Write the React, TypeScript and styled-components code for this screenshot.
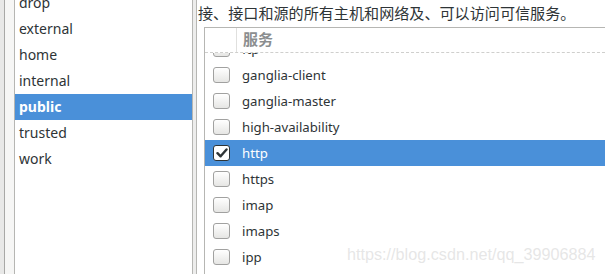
import React from "react";
import styled, { createGlobalStyle } from "styled-components";

const GlobalStyle = createGlobalStyle`
  html, body {
    margin: 0;
    padding: 0;
    background: #ffffff;
  }
  body {
    font-family: "Noto Sans", "Noto Sans CJK SC", sans-serif;
    color: #2e3436;
  }
`;

const zones = ["drop", "external", "home", "internal", "public", "trusted", "work"];
const services = [
  "ftp",
  "ganglia-client",
  "ganglia-master",
  "high-availability",
  "http",
  "https",
  "imap",
  "imaps",
  "ipp",
  "ipp-client",
];

const Frame = styled.div`
  display: flex;
  width: 605px;
  height: 274px;
  overflow: hidden;
  position: relative;
`;

const Gutter = styled.div`
  width: 4px;
  background: #e8e8e7;
  border-right: 1px solid #a8a8a6;
  flex-shrink: 0;
`;

const LeftPane = styled.div`
  width: 188px;
  flex-shrink: 0;
  background: #f6f6f5;
  padding-left: 9px;
  box-sizing: border-box;
  display: flex;
`;

const ZoneList = styled.div`
  flex: 1;
  background: #ffffff;
  border-left: 1px solid #b6b6b3;
  border-right: 1px solid #b6b6b3;
  overflow: hidden;
`;

const ZoneScroll = styled.div`
  margin-top: -10px;
`;

const ZoneRow = styled.div<{ $selected?: boolean }>`
  height: 26px;
  line-height: 26px;
  padding-left: 4px;
  font-size: 14px;
  font-weight: ${(p) => (p.$selected ? 700 : 400)};
  background: ${(p) => (p.$selected ? "#4a90d9" : "transparent")};
  color: ${(p) => (p.$selected ? "#ffffff" : "#2e3436")};
`;

const Divider = styled.div`
  width: 3px;
  flex-shrink: 0;
  background: #ededec;
  border-right: 1px solid #b6b6b3;
`;

const RightPane = styled.div`
  flex: 1;
  background: #ffffff;
  display: flex;
  flex-direction: column;
  min-width: 0;
`;

const Description = styled.div`
  height: 27px;
  padding-left: 1px;
  font-size: 15.1px;
  line-height: 24px;
  white-space: nowrap;
  font-family: "Noto Sans CJK SC", sans-serif;
  color: #2e3436;
  flex-shrink: 0;
`;

const TableWrap = styled.div`
  flex: 1;
  margin-left: 7px;
  border-left: 1px solid #b6b6b3;
  border-top: 1px solid #b6b6b3;
  display: flex;
  flex-direction: column;
  overflow: hidden;
`;

const HeaderRow = styled.div`
  display: flex;
  height: 24px;
  border-bottom: 1px dashed #cfcfcd;
  flex-shrink: 0;
`;

const HeaderCheckCell = styled.div`
  width: 31px;
  border-right: 1px solid #e0e0de;
`;

const HeaderTitle = styled.div`
  padding-left: 6px;
  font-size: 15px;
  font-weight: 700;
  line-height: 21px;
  color: #8b8e8f;
  font-family: "Noto Sans CJK SC", sans-serif;
`;

const Body = styled.div`
  flex: 1;
  overflow: hidden;
`;

const BodyScroll = styled.div`
  margin-top: -17px;
`;

const ServiceRow = styled.div<{ $selected?: boolean }>`
  display: flex;
  align-items: center;
  height: 26px;
  background: ${(p) => (p.$selected ? "#4a90d9" : "transparent")};
  color: ${(p) => (p.$selected ? "#ffffff" : "#2e3436")};
  font-size: 13.2px;
`;

const CheckCell = styled.div`
  width: 37px;
  display: flex;
  padding-left: 8px;
  box-sizing: border-box;
`;

const Box = styled.div<{ $checked?: boolean }>`
  width: 15px;
  height: 14px;
  border: 1px solid ${(p) => (p.$checked ? "#2e3436" : "#a1a1a0")};
  border-radius: 3px;
  background: ${(p) =>
    p.$checked ? "#ffffff" : "linear-gradient(#ffffff, #e6e6e4)"};
  display: flex;
  align-items: center;
  justify-content: center;
`;

const Label = styled.div`
  padding-left: 0;
`;

const Watermark = styled.div`
  position: absolute;
  left: 347px;
  top: 245px;
  font-family: "Liberation Sans", Arial, sans-serif;
  font-size: 16.2px;
  color: rgba(205, 205, 205, 0.5);
  pointer-events: none;
  white-space: nowrap;
`;

const Check = () => (
  <svg width="12" height="12" viewBox="0 0 12 12">
    <path
      d="M1.5 6.2 L4.6 9.3 L10.5 2.5"
      fill="none"
      stroke="#2e3436"
      strokeWidth="2.4"
      strokeLinecap="round"
      strokeLinejoin="round"
    />
  </svg>
);

export default function App() {
  return (
    <>
      <GlobalStyle />
      <Frame>
        <Gutter />
        <LeftPane>
          <ZoneList>
            <ZoneScroll>
              {zones.map((z) => (
                <ZoneRow key={z} $selected={z === "public"}>
                  {z}
                </ZoneRow>
              ))}
            </ZoneScroll>
          </ZoneList>
        </LeftPane>
        <Divider />
        <RightPane>
          <Description>
            接、接口和源的所有主机和网络及、可以访问可信服务。
          </Description>
          <TableWrap>
            <HeaderRow>
              <HeaderCheckCell />
              <HeaderTitle>服务</HeaderTitle>
            </HeaderRow>
            <Body>
              <BodyScroll>
                {services.map((s) => {
                  const on = s === "http";
                  return (
                    <ServiceRow key={s} $selected={on}>
                      <CheckCell>
                        <Box $checked={on}>{on && <Check />}</Box>
                      </CheckCell>
                      <Label>{s}</Label>
                    </ServiceRow>
                  );
                })}
              </BodyScroll>
            </Body>
          </TableWrap>
        </RightPane>
        <Watermark>https://blog.csdn.net/qq_39906884</Watermark>
      </Frame>
    </>
  );
}
